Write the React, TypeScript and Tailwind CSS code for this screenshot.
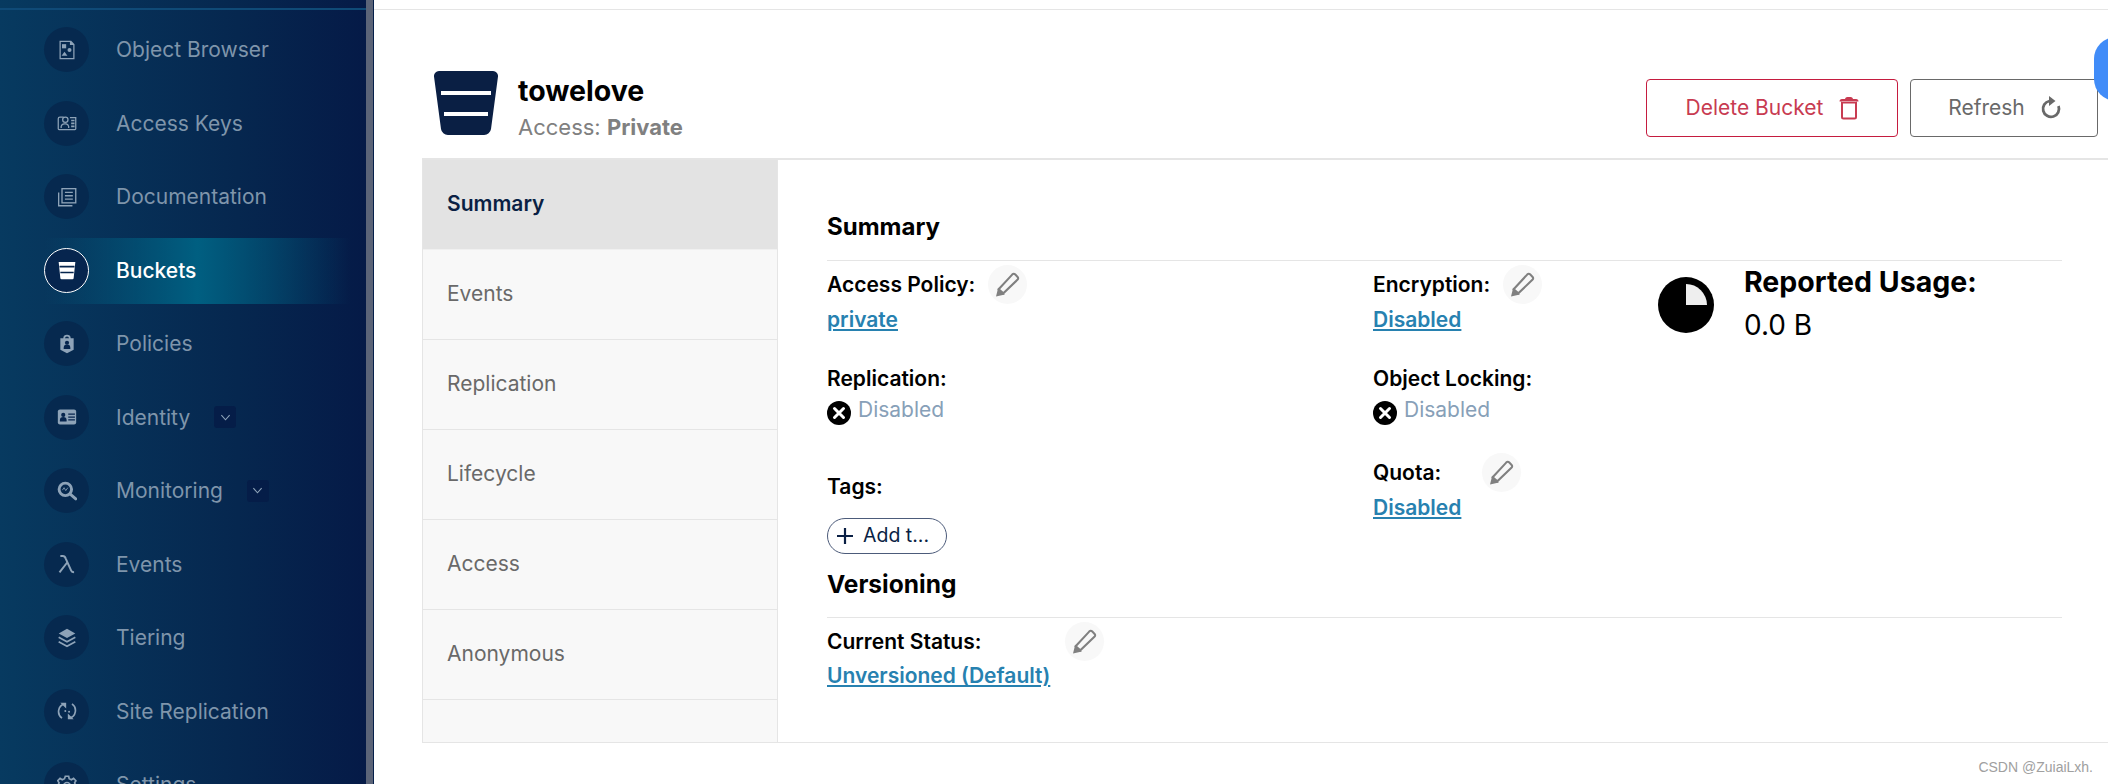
import type { ReactNode } from "react";

const fg = "currentColor";

// Sidebar glyphs, all on a 24 box
const icons: Record<string, ReactNode> = {
  object: (
    <g fill={fg}>
      <path fillRule="evenodd" d="M3 1h14l4 4v18H3zM4.500 2.500v19h15V6h-4V2.500z" />
      <rect x="6" y="5" width="5" height="5" />
      <circle cx="15" cy="12" r="2.400" />
      <path d="M9 14l3.500 5h-7z" />
    </g>
  ),
  keys: (
    <g fill="none" stroke={fg} strokeWidth="1.500">
      <path d="M8 5H3.500a2 2 0 0 0-2 2v12a1 1 0 0 0 1 1h19a1 1 0 0 0 1-1V5.500h-7" />
      <circle cx="10" cy="8" r="3.200" />
      <path d="M5 18v-2a4 4 0 0 1 4-3h2a4 4 0 0 1 3 3v2" />
      <path d="M17 9h4M17 12.500h4M17 16h4" strokeWidth="2" />
    </g>
  ),
  docs: (
    <g fill="none" stroke={fg} strokeWidth="1.600">
      <rect x="6" y="2" width="16.500" height="17" />
      <path d="M9.500 6.500h9.500M9.500 10.500h9.500M9.500 14.500h9.500" />
      <path d="M2 6.500V22.500h16.500" />
    </g>
  ),
  bucket: (
    <g>
      <path fill={fg} d="M2 2.500h20L20 21.500a1.500 1.500 0 0 1-1.500 1.500h-13A1.500 1.500 0 0 1 4 21.500z" />
      <path stroke="#06254e" strokeWidth="2" d="M3 8h18M4 15h16" />
    </g>
  ),
  policies: (
    <g>
      <path fill={fg} d="M12 1a4.500 4.500 0 0 1 4.500 4H20v14l-8 4-8-4V5h3.500A4.500 4.500 0 0 1 12 1zm0 2a2.500 2.500 0 0 0-2.500 2h5A2.500 2.500 0 0 0 12 3z" />
      <circle cx="12" cy="10.500" r="2.500" fill="#06254e" />
      <path fill="#06254e" d="M8 18v-1.500a4 4 0 0 1 8 0V18z" />
    </g>
  ),
  identity: (
    <g>
      <rect x="1" y="3" width="22" height="18" rx="2.500" fill={fg} />
      <circle cx="7.500" cy="9.500" r="2.500" fill="#06254e" />
      <path fill="#06254e" d="M3.500 17.500v-1.500a4 4 0 0 1 8 0v1.500z" />
      <path stroke="#06254e" strokeWidth="1.500" d="M13.500 8.500h8M13.500 12h8M13.500 15.500h8" />
    </g>
  ),
  monitoring: (
    <g>
      <circle cx="10" cy="10" r="7.500" fill="none" stroke={fg} strokeWidth="3.500" />
      <path d="M6.500 11l2-3 2 3.500 2.500-3.500" fill="none" stroke={fg} strokeWidth="1" />
      <path d="M15.500 15.500l7 6" stroke={fg} strokeWidth="3.500" strokeLinecap="round" />
    </g>
  ),
  lambda: <path fill="none" stroke={fg} strokeWidth="2.400" d="M4 2.500h3c2 0 2.800 1 3.500 3L17 20c.6 1.400 1.400 1.900 3.500 1.900M12 10.500L3 22" />,
  tiering: (
    <g fill={fg}>
      <path d="M12 1l10 5.500L12 12 2 6.500z" />
      <path fill="none" stroke={fg} strokeWidth="2" d="M2 11l10 5.500L22 11M2 16.500L12 22l10-5.500" />
    </g>
  ),
  replication: (
    <g fill="none" stroke={fg} strokeWidth="2">
      <path d="M9 3.500a9.500 9.500 0 0 0-3 17M15 20.500a9.500 9.500 0 0 0 3-17" />
      <path fill={fg} stroke="none" d="M4 2h7v7zM20 22h-7v-7z" />
      <circle cx="10" cy="12" r="1.200" fill={fg} stroke="none" />
      <circle cx="14.500" cy="13" r="1.200" fill={fg} stroke="none" />
    </g>
  ),
  settings: (
    <g fill="none" stroke={fg} strokeWidth="2">
      <path d="M10 1.500h4l.6 3 2.700 1.200 2.600-1.600 2.800 2.800-1.600 2.600 1.200 2.700 2.700.6v4l-3 .6-1.100 2.700 1.600 2.600-2.800 2.800-2.600-1.600-2.700 1.100-.6 3h-4l-.6-3-2.700-1.100-2.600 1.600-2.800-2.800 1.600-2.600-1.100-2.700-3-.6v-4l2.700-.6 1.200-2.700-1.600-2.600 2.800-2.800 2.600 1.600 2.700-1.200z" />
      <circle cx="12" cy="13" r="4" />
    </g>
  ),
};

const menu = [
  { label: "Object Browser", icon: "object" },
  { label: "Access Keys", icon: "keys" },
  { label: "Documentation", icon: "docs" },
  { label: "Buckets", icon: "bucket", active: true },
  { label: "Policies", icon: "policies" },
  { label: "Identity", icon: "identity", sub: true },
  { label: "Monitoring", icon: "monitoring", sub: true },
  { label: "Events", icon: "lambda" },
  { label: "Tiering", icon: "tiering" },
  { label: "Site Replication", icon: "replication" },
  { label: "Settings", icon: "settings" },
];

const tabs = ["Summary", "Events", "Replication", "Lifecycle", "Access", "Anonymous"];

function MenuItem({ label, icon, active, sub }: { label: string; icon: string; active?: boolean; sub?: boolean }) {
  return (
    <div className="relative flex h-[73.5px] shrink-0 items-center pl-[44px]">
      {active && (
        <div className="absolute left-[45px] top-[4px] h-[66px] w-[305px] bg-[linear-gradient(90deg,transparent_0%,#005f81_50%,transparent_100%)]" />
      )}
      <div
        className={
          active
            ? "relative z-10 flex h-[45px] w-[45px] items-center justify-center rounded-full border border-white bg-[#06254e] text-white"
            : "relative z-10 flex h-[45px] w-[45px] items-center justify-center rounded-full bg-[#06294f] text-[#8ea3b8]"
        }
      >
        <svg viewBox="0 0 24 24" className="h-[20px] w-[20px]">
          {icons[icon]}
        </svg>
      </div>
      <span className={active ? "relative z-10 ml-[27px] text-[21px] font-medium text-white" : "relative z-10 ml-[27px] text-[21px] text-[#7f95ab]"}>
        {label}
      </span>
      {sub && (
        <span className="relative z-10 ml-[24px] flex h-[22px] w-[22px] items-center justify-center rounded-[3px] bg-[#051d48] text-[#8ea3b8]">
          <svg viewBox="0 0 12 12" className="h-[11px] w-[11px]" fill="none" stroke="currentColor" strokeWidth="1.200">
            <path d="M1.500 3.500L6 8.500l4.500-5" />
          </svg>
        </span>
      )}
    </div>
  );
}

function Pencil() {
  return (
    <span className="flex h-[39px] w-[39px] items-center justify-center rounded-full bg-[#f8f8f8]">
      <svg viewBox="0 0 24 24" className="h-[25px] w-[25px]" fill="none" stroke="#808080" strokeWidth="2">
        <path d="M3.500 16.500L16.500 2.500c1-1 2-1 3 0l2 2c1 1 1 2 0 3L8 20.500z" />
        <path fill="#808080" stroke="none" d="M3 15l6.500 6.500L1 23.500z" />
      </svg>
    </span>
  );
}

function Label({ children }: { children: ReactNode }) {
  return <span className="text-[21px] font-semibold leading-[39px] text-black">{children}</span>;
}

function LinkValue({ children }: { children: ReactNode }) {
  return <div className="text-[21px] font-semibold leading-[32px] text-[#2781b0] underline">{children}</div>;
}

function DisabledRow() {
  return (
    <div className="flex items-start gap-[7px]">
      <svg viewBox="0 0 24 24" className="mt-[4px] h-[24px] w-[24px]">
        <circle cx="12" cy="12" r="12" fill="#000000" />
        <path d="M7.500 7.500l9 9M16.500 7.500l-9 9" stroke="#ffffff" strokeWidth="3" strokeLinecap="round" />
      </svg>
      <span className="text-[21px] leading-[26px] text-[#87a0b8]">Disabled</span>
    </div>
  );
}

export default function App() {
  return (
    <div className="flex h-[784px] overflow-hidden bg-white font-['Inter',sans-serif]">
      <aside className="flex h-full w-[374px] shrink-0 border-r border-[#06204a]">
        <div className="flex w-[366px] shrink-0 flex-col bg-[linear-gradient(90deg,#073a60_0%,#06274f_65%,#051a47_100%)]">
          <div className="mt-[8px] h-[2px] shrink-0 bg-[#0f4a77]" />
          <nav className="mt-[3px] flex flex-col">
            {menu.map((item) => (
              <MenuItem key={item.label} {...item} />
            ))}
          </nav>
        </div>
        <div className="w-[7px] shrink-0 bg-[#5b6478]" />
      </aside>

      <main className="relative min-w-0 flex-1">
        <div className="h-[10px] border-b border-[#e5e5e5]" />

        {/* chat bubble cut off at the window edge */}
        <div className="absolute right-[-50px] top-[37px] h-[64px] w-[64px] rounded-[22px] bg-[#418cf8]" />

        <header className="flex h-[148px] items-start pl-[60px] pr-[10px]">
          <svg viewBox="0 0 64 64" className="mt-[61px] h-[64px] w-[64px] shrink-0">
            <path fill="#0a1f44" d="M5 0h54a5 5 0 0 1 5 5.500L57 58a7 7 0 0 1-7 6H14a7 7 0 0 1-7-6L0 5.500A5 5 0 0 1 5 0z" />
            <rect x="7" y="20" width="50" height="4" fill="#ffffff" />
            <rect x="10" y="41" width="44" height="4" fill="#ffffff" />
          </svg>
          <div className="ml-[20px] mt-[66px]">
            <h1 className="text-[28.5px] font-bold leading-[30px] text-black">towelove</h1>
            <div className="mt-[8px] text-[22px] leading-[26px] text-[#808080]">
              Access: <span className="font-bold">Private</span>
            </div>
          </div>
          <div className="ml-auto mt-[69px] flex gap-[12px]">
            <button className="flex h-[58px] w-[252px] items-center justify-center gap-[14px] rounded-[4px] border border-[#c51c3f] pl-[3px] text-[21px] text-[#c83b51]">
              Delete Bucket
              <svg viewBox="0 0 24 24" className="h-[24px] w-[24px]" fill="none" stroke="currentColor" strokeWidth="2">
                <path d="M5 6.500h14v14.500a1.500 1.500 0 0 1-1.500 1.500h-11A1.500 1.500 0 0 1 5 21z" />
                <path d="M3.500 5.500c0-1 .5-1.500 1.500-1.500h14c1 0 1.500.5 1.500 1.500M9 3.500c0-1 .5-1.500 1.500-1.500h3c1 0 1.500.5 1.500 1.500" />
              </svg>
            </button>
            <button className="flex h-[58px] w-[188px] items-center justify-center gap-[14px] rounded-[4px] border border-[#696969] pl-[3px] text-[21px] text-[#696969]">
              Refresh
              <svg viewBox="0 0 24 24" className="h-[24px] w-[24px]" fill="none" stroke="currentColor" strokeWidth="2.800">
                <path d="M10.500 5a8 8 0 1 0 9 5" />
                <path fill="currentColor" stroke="none" d="M10 0l6.500 5L10 10z" />
              </svg>
            </button>
          </div>
        </header>

        <section className="ml-[48px] flex h-[585px] border-b border-t-2 border-[#e5e5e5]">
          <div className="flex w-[356px] shrink-0 flex-col border-l border-r border-[#e5e5e5] bg-[#f8f8f8]">
            {tabs.map((tab, i) => (
              <div
                key={tab}
                className={
                  i === 0
                    ? "flex h-[90px] shrink-0 items-center border-b border-[#f0f0f0] bg-[#e3e3e3] pb-[2px] pl-[24px] text-[21px] font-semibold text-[#0a1f44]"
                    : "flex h-[90px] shrink-0 items-center border-b border-[#e5e5e5] pb-[2px] pl-[24px] text-[21px] text-[#696969]"
                }
              >
                {tab}
              </div>
            ))}
          </div>

          <div className="flex-1 pl-[49px] pr-[46px]">
            <h2 className="mt-[49px] h-[52px] border-b border-[#e5e5e5] text-[24px] font-bold leading-[36px] text-black">Summary</h2>

            <div className="grid grid-cols-[546px_285px_1fr]">
              <div>
                <div className="mt-[4px] flex items-center gap-[13px]">
                  <Label>Access Policy:</Label>
                  <Pencil />
                </div>
                <LinkValue>private</LinkValue>
                <div className="mt-[23px]">
                  <Label>Replication:</Label>
                </div>
                <div className="-mt-[1px]">
                  <DisabledRow />
                </div>
                <div className="mt-[42px]">
                  <Label>Tags:</Label>
                </div>
                <button className="mt-[12px] flex h-[36px] w-[120px] items-center gap-[9px] rounded-full border border-[#4c5b7a] pl-[8px] text-[19.5px] text-[#0a1f44]">
                  <svg viewBox="0 0 18 18" className="h-[18px] w-[18px]" stroke="#0a1f44" strokeWidth="2.200">
                    <path d="M9 1v16M1 9h16" />
                  </svg>
                  Add t...
                </button>
              </div>

              <div>
                <div className="mt-[4px] flex items-center gap-[13px]">
                  <Label>Encryption:</Label>
                  <Pencil />
                </div>
                <LinkValue>Disabled</LinkValue>
                <div className="mt-[23px]">
                  <Label>Object Locking:</Label>
                </div>
                <div className="-mt-[1px]">
                  <DisabledRow />
                </div>
                <div className="mt-[28px] flex items-center gap-[41px]">
                  <Label>Quota:</Label>
                  <Pencil />
                </div>
                <LinkValue>Disabled</LinkValue>
              </div>

              <div className="flex items-start">
                <svg viewBox="0 0 56 56" className="mt-[16px] h-[56px] w-[56px] shrink-0">
                  <circle cx="28" cy="28" r="28" fill="#000000" />
                  <path fill="#eeeeee" d="M28 7a21 21 0 0 1 21 21H28z" />
                </svg>
                <div className="ml-[30px] mt-[3px]">
                  <div className="text-[28.5px] font-bold leading-[36px] text-black">Reported Usage:</div>
                  <div className="mt-[7px] text-[28px] leading-[36px] text-black">0.0 B</div>
                </div>
              </div>
            </div>

            <h2 className="mt-[12px] h-[52px] border-b border-[#e5e5e5] text-[24.500px] font-bold leading-[36px] text-black">Versioning</h2>
            <div className="mt-[4px] flex items-center">
              <div className="w-[238px]">
                <Label>Current Status:</Label>
              </div>
              <Pencil />
            </div>
            <div className="-mt-[1px]">
              <LinkValue>Unversioned (Default)</LinkValue>
            </div>
          </div>
        </section>

        <div className="absolute bottom-[6px] right-[15px] font-['Liberation_Sans',sans-serif] text-[14px] text-[#a0a0a0]">CSDN @ZuiaiLxh.</div>
      </main>
    </div>
  );
}
